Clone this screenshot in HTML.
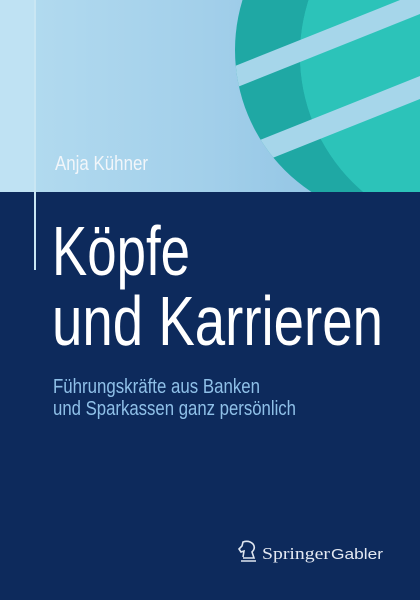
<!DOCTYPE html>
<html><head><meta charset="utf-8"><style>
html,body{margin:0;padding:0;width:420px;height:600px;overflow:hidden;background:#0d2a5c}
svg{display:block}
</style></head><body>
<svg width="420" height="600" viewBox="0 0 420 600" xmlns="http://www.w3.org/2000/svg">
<defs>
<linearGradient id="bg" x1="0" y1="0" x2="1" y2="0">
<stop offset="0" stop-color="#b4dcf0"/><stop offset="0.5" stop-color="#a2cfea"/><stop offset="1" stop-color="#86bde0"/>
</linearGradient>
<clipPath id="c"><circle cx="405" cy="50" r="170"/></clipPath>
<clipPath id="top"><rect x="0" y="0" width="420" height="192"/></clipPath>
</defs>
<rect x="0" y="0" width="420" height="600" fill="#0d2a5c"/>
<rect x="0" y="0" width="420" height="192" fill="url(#bg)"/>
<rect x="0" y="0" width="35" height="192" fill="#bfe2f3"/>
<g clip-path="url(#top)">
<circle cx="405" cy="50" r="170" fill="#1fa8a4"/>
<g clip-path="url(#c)"><circle cx="480" cy="55" r="180" fill="#2cc3b9"/></g>
<circle cx="480" cy="55" r="180" fill="#2cc3b9"/>
<g clip-path="url(#c)" fill="#a6d6ea">
<polygon points="230,68 430,-12 430,10 230,90"/>
<polygon points="230,152 430,72 430,95 230,175"/>
</g>
</g>
<rect x="34" y="0" width="2" height="270" fill="#c9e6f3"/>
<g font-family="'Liberation Sans Narrow','Liberation Sans',sans-serif">
<text x="55" y="170" font-size="20" fill="#f2f6fa" textLength="93" lengthAdjust="spacingAndGlyphs">Anja Kühner</text>
<text x="52" y="275" font-size="70" fill="#ffffff" textLength="138" lengthAdjust="spacingAndGlyphs">Köpfe</text>
<text x="52" y="345" font-size="70" fill="#ffffff" textLength="331" lengthAdjust="spacingAndGlyphs">und Karrieren</text>
<text x="53" y="393" font-size="20" fill="#8fc0e8" textLength="207" lengthAdjust="spacingAndGlyphs">Führungskräfte aus Banken</text>
<text x="53" y="415" font-size="20" fill="#8fc0e8" textLength="243" lengthAdjust="spacingAndGlyphs">und Sparkassen ganz persönlich</text>
</g>
<g fill="none" stroke="#dfe6f0" stroke-width="1.6">
<path d="M241,561 L256,561 M243,558 L254,558 L252,552 Q256,548 253,544 Q249,540 243,542 L242,546 L239,549 L241,552 L244,551 L243,557"/>
</g>
<text x="262" y="559" font-family="'Liberation Serif',serif" font-size="17" fill="#e4e9f2" textLength="68" lengthAdjust="spacingAndGlyphs">Springer</text>
<text x="331" y="559" font-family="'Liberation Sans',sans-serif" font-size="15" fill="#e4e9f2" textLength="52" lengthAdjust="spacingAndGlyphs">Gabler</text>
</svg>
</body></html>
